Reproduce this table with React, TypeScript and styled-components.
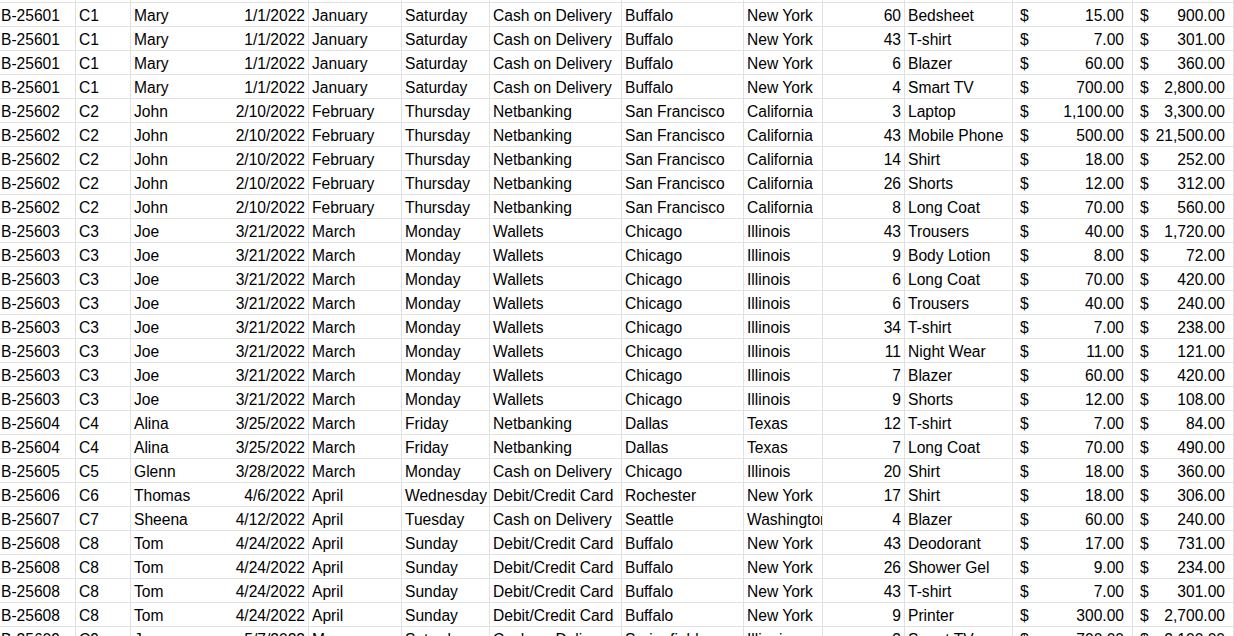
import React from 'react'
import styled, { createGlobalStyle, css } from 'styled-components'

const GlobalStyle = createGlobalStyle`
    html, body {
        margin: 0;
        padding: 0;
        background: #fff;
        overflow: hidden;
    }
    body {
        font-family: "Liberation Sans", Arial, sans-serif;
    }
`

const columns = '76px 55px 90px 88px 93px 88px 132px 122px 79px 82px 108px 120px 101px'

const Sheet = styled.div`
    width: 1234px;
    height: 636px;
    overflow: hidden;
    color: #000;
    font-size: 15.6px;
`

const Row = styled.div<{ stub?: boolean }>`
    display: grid;
    grid-template-columns: ${columns};
    height: 24px;
    ${p => p.stub && css`
        height: 3px;
    `}
`

type CellProps = {
    align?: 'left' | 'right'
    open?: boolean
    first?: boolean
}

const Cell = styled.div<CellProps>`
    box-sizing: border-box;
    border-right: 1px solid ${p => p.open ? 'transparent' : '#e1e1e1'};
    border-bottom: 1px solid #e1e1e1;
    display: flex;
    align-items: flex-end;
    justify-content: ${p => p.align === 'right' ? 'flex-end' : 'flex-start'};
    padding: 0 3px 1px ${p => p.first ? '1px' : '3px'};
    line-height: 18px;
    white-space: nowrap;
    overflow: hidden;
`

const Money = styled(Cell)`
    justify-content: space-between;
    padding: 0 8px 1px 7px;
`

type Line = [string, string, string, string, string, string, string, string, string, number, string, string, string]

const orders: Line[] = [
    ['B-25601', 'C1', 'Mary', '1/1/2022', 'January', 'Saturday', 'Cash on Delivery', 'Buffalo', 'New York', 60, 'Bedsheet', '15.00', '900.00'],
    ['B-25601', 'C1', 'Mary', '1/1/2022', 'January', 'Saturday', 'Cash on Delivery', 'Buffalo', 'New York', 43, 'T-shirt', '7.00', '301.00'],
    ['B-25601', 'C1', 'Mary', '1/1/2022', 'January', 'Saturday', 'Cash on Delivery', 'Buffalo', 'New York', 6, 'Blazer', '60.00', '360.00'],
    ['B-25601', 'C1', 'Mary', '1/1/2022', 'January', 'Saturday', 'Cash on Delivery', 'Buffalo', 'New York', 4, 'Smart TV', '700.00', '2,800.00'],
    ['B-25602', 'C2', 'John', '2/10/2022', 'February', 'Thursday', 'Netbanking', 'San Francisco', 'California', 3, 'Laptop', '1,100.00', '3,300.00'],
    ['B-25602', 'C2', 'John', '2/10/2022', 'February', 'Thursday', 'Netbanking', 'San Francisco', 'California', 43, 'Mobile Phone', '500.00', '21,500.00'],
    ['B-25602', 'C2', 'John', '2/10/2022', 'February', 'Thursday', 'Netbanking', 'San Francisco', 'California', 14, 'Shirt', '18.00', '252.00'],
    ['B-25602', 'C2', 'John', '2/10/2022', 'February', 'Thursday', 'Netbanking', 'San Francisco', 'California', 26, 'Shorts', '12.00', '312.00'],
    ['B-25602', 'C2', 'John', '2/10/2022', 'February', 'Thursday', 'Netbanking', 'San Francisco', 'California', 8, 'Long Coat', '70.00', '560.00'],
    ['B-25603', 'C3', 'Joe', '3/21/2022', 'March', 'Monday', 'Wallets', 'Chicago', 'Illinois', 43, 'Trousers', '40.00', '1,720.00'],
    ['B-25603', 'C3', 'Joe', '3/21/2022', 'March', 'Monday', 'Wallets', 'Chicago', 'Illinois', 9, 'Body Lotion', '8.00', '72.00'],
    ['B-25603', 'C3', 'Joe', '3/21/2022', 'March', 'Monday', 'Wallets', 'Chicago', 'Illinois', 6, 'Long Coat', '70.00', '420.00'],
    ['B-25603', 'C3', 'Joe', '3/21/2022', 'March', 'Monday', 'Wallets', 'Chicago', 'Illinois', 6, 'Trousers', '40.00', '240.00'],
    ['B-25603', 'C3', 'Joe', '3/21/2022', 'March', 'Monday', 'Wallets', 'Chicago', 'Illinois', 34, 'T-shirt', '7.00', '238.00'],
    ['B-25603', 'C3', 'Joe', '3/21/2022', 'March', 'Monday', 'Wallets', 'Chicago', 'Illinois', 11, 'Night Wear', '11.00', '121.00'],
    ['B-25603', 'C3', 'Joe', '3/21/2022', 'March', 'Monday', 'Wallets', 'Chicago', 'Illinois', 7, 'Blazer', '60.00', '420.00'],
    ['B-25603', 'C3', 'Joe', '3/21/2022', 'March', 'Monday', 'Wallets', 'Chicago', 'Illinois', 9, 'Shorts', '12.00', '108.00'],
    ['B-25604', 'C4', 'Alina', '3/25/2022', 'March', 'Friday', 'Netbanking', 'Dallas', 'Texas', 12, 'T-shirt', '7.00', '84.00'],
    ['B-25604', 'C4', 'Alina', '3/25/2022', 'March', 'Friday', 'Netbanking', 'Dallas', 'Texas', 7, 'Long Coat', '70.00', '490.00'],
    ['B-25605', 'C5', 'Glenn', '3/28/2022', 'March', 'Monday', 'Cash on Delivery', 'Chicago', 'Illinois', 20, 'Shirt', '18.00', '360.00'],
    ['B-25606', 'C6', 'Thomas', '4/6/2022', 'April', 'Wednesday', 'Debit/Credit Card', 'Rochester', 'New York', 17, 'Shirt', '18.00', '306.00'],
    ['B-25607', 'C7', 'Sheena', '4/12/2022', 'April', 'Tuesday', 'Cash on Delivery', 'Seattle', 'Washington', 4, 'Blazer', '60.00', '240.00'],
    ['B-25608', 'C8', 'Tom', '4/24/2022', 'April', 'Sunday', 'Debit/Credit Card', 'Buffalo', 'New York', 43, 'Deodorant', '17.00', '731.00'],
    ['B-25608', 'C8', 'Tom', '4/24/2022', 'April', 'Sunday', 'Debit/Credit Card', 'Buffalo', 'New York', 26, 'Shower Gel', '9.00', '234.00'],
    ['B-25608', 'C8', 'Tom', '4/24/2022', 'April', 'Sunday', 'Debit/Credit Card', 'Buffalo', 'New York', 43, 'T-shirt', '7.00', '301.00'],
    ['B-25608', 'C8', 'Tom', '4/24/2022', 'April', 'Sunday', 'Debit/Credit Card', 'Buffalo', 'New York', 9, 'Printer', '300.00', '2,700.00'],
    ['B-25609', 'C9', 'Jessy', '5/7/2022', 'May', 'Saturday', 'Cash on Delivery', 'Springfield', 'Illinois', 3, 'Smart TV', '700.00', '2,100.00'],
]

const OrderRow: React.FC<{ line: Line }> = ({ line }) => {
    const [order, cust, name, date, month, day, pay, city, state, qty, product, price, total] = line
    return <Row>
        <Cell first>{order}</Cell>
        <Cell>{cust}</Cell>
        <Cell open>{name}</Cell>
        <Cell align='right'>{date}</Cell>
        <Cell>{month}</Cell>
        <Cell>{day}</Cell>
        <Cell>{pay}</Cell>
        <Cell>{city}</Cell>
        <Cell>{state}</Cell>
        <Cell align='right'>{qty}</Cell>
        <Cell>{product}</Cell>
        <Money><span>$</span><span>{price}</span></Money>
        <Money><span>$</span><span>{total}</span></Money>
    </Row>
}

const App: React.FC = () => {
    return <>
        <GlobalStyle />
        <Sheet>
            <Row stub>
                {Array.from(Array(13).keys()).map(i => <Cell key={i} open={i === 2} />)}
            </Row>
            {orders.map((line, i) => <OrderRow key={i} line={line} />)}
        </Sheet>
    </>
}

export default App
